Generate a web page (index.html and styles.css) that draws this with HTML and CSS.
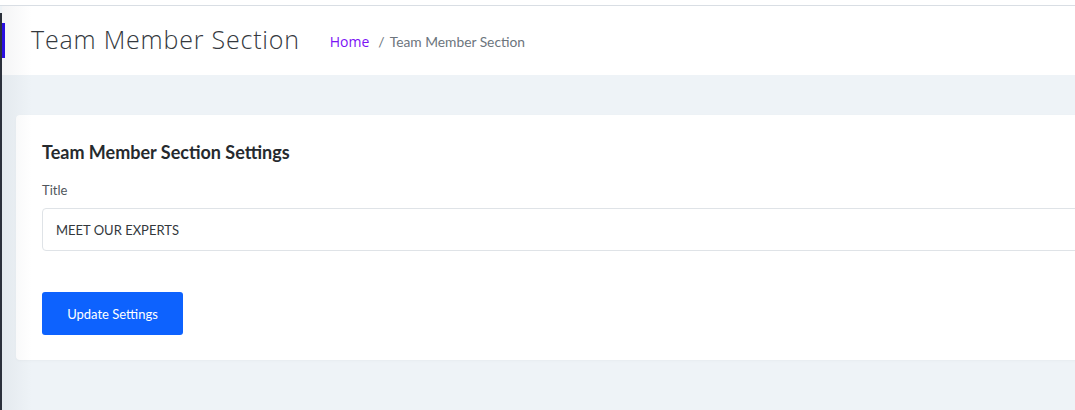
FILE: index.html
```html
<!DOCTYPE html>
<html>
<head>
<meta charset="utf-8">
<link rel="stylesheet" href="styles.css">
</head>
<body>
<div class="topstrip"></div>
<div class="frame">
  <div class="edge"></div>
  <div class="page">
    <header class="pagehead">
      <span class="accent"></span>
      <h1 class="pagetitle">Team Member Section</h1>
      <nav class="crumbs">
        <a class="crumb-home">Home</a>
        <span class="crumb-sep">/</span>
        <span class="crumb-current">Team Member Section</span>
      </nav>
    </header>
    <main class="content">
      <section class="card">
        <h2 class="card-title">Team Member Section Settings</h2>
        <label class="field-label">Title</label>
        <div class="input">MEET OUR EXPERTS</div>
        <button class="btn">Update Settings</button>
      </section>
    </main>
  </div>
</div>
</body>
</html>
```

FILE: styles.css
```css
html, body { margin: 0; padding: 0; }
body {
  width: 1075px;
  height: 410px;
  overflow: hidden;
  background: #eef3f7;
  font-family: "Lato", "Liberation Sans", sans-serif;
}
.topstrip {
  height: 5px;
  background: #fff;
  border-bottom: 1px solid #d9dee4;
}
.frame {
  display: flex;
  height: 404px;
}
.edge {
  width: 2px;
  margin-top: 7px;
  background: #2b303b;
  flex: none;
}
.page {
  flex: 1;
  display: flex;
  flex-direction: column;
  position: relative;
}
.page::before {
  content: "";
  position: absolute;
  left: 0; top: 0; bottom: 0;
  width: 30px;
  background: linear-gradient(to right, rgba(40,50,70,0.05), rgba(40,50,70,0));
  pointer-events: none;
  z-index: 2;
}
.pagehead {
  height: 69px;
  background: #fff;
  display: flex;
  align-items: center;
  position: relative;
}
.accent {
  position: absolute;
  left: 0;
  top: 17px;
  width: 3px;
  height: 35px;
  background: #2a0de8;
}
.pagetitle {
  margin: 0 0 3px 29px;
  font-family: "Open Sans", sans-serif;
  font-weight: 300;
  font-size: 25px;
  color: #34393e;
  letter-spacing: 0.8px;
}
.crumbs {
  margin-left: 30px;
  display: flex;
  align-items: baseline;
  font-size: 13.8px;
  color: #6c757d;
  padding-top: 1px;
}
.crumb-home {
  font-family: "Open Sans", sans-serif;
  font-size: 14px;
  color: #7b12f5;
}
.crumb-sep { margin: 0 5px 0 9px; font-size: 14px; }
.content {
  flex: 1;
  padding: 40px 0 0 14px;
}
.card {
  background: #fff;
  border-radius: 4px;
  height: 245px;
  box-sizing: border-box;
  padding: 26px 0 0 26px;
  margin-right: -20px;
  box-shadow: 0 1px 3px rgba(0,0,0,0.03);
}
.card-title {
  margin: 0 0 19px;
  font-size: 18px;
  font-weight: 700;
  color: #262a2e;
}
.field-label {
  display: block;
  font-size: 13px;
  color: #50565c;
  margin-bottom: 10px;
}
.input {
  height: 43px;
  box-sizing: border-box;
  border: 1px solid #dfe3e7;
  border-radius: 4px;
  padding: 0 13px;
  display: flex;
  align-items: center;
  font-size: 13px;
  color: #33383d;
  margin-bottom: 41px;
}
.btn {
  width: 141px;
  height: 43px;
  border: none;
  border-radius: 3px;
  background: #0d62fe;
  color: #fff;
  font-family: "Lato", sans-serif;
  font-size: 13px;
  padding: 0;
}
```
